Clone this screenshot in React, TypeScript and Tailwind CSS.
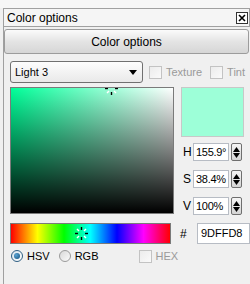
import React from 'react';

const Marker: React.FC<{ className: string }> = ({ className }) => (
  <svg className={className} width="15" height="15" viewBox="0 0 15 15">
    {/* cardinal ticks */}
    <g stroke="#000" strokeWidth="1.4">
      <line x1="7.5" y1="1" x2="7.5" y2="4" />
      <line x1="7.5" y1="11" x2="7.5" y2="14" />
      <line x1="1" y1="7.5" x2="4" y2="7.5" />
      <line x1="11" y1="7.5" x2="14" y2="7.5" />
    </g>
    {/* diagonal ticks */}
    <g stroke="#fff" strokeWidth="1.4">
      <line x1="3" y1="3" x2="5" y2="5" />
      <line x1="12" y1="3" x2="10" y2="5" />
      <line x1="3" y1="12" x2="5" y2="10" />
      <line x1="12" y1="12" x2="10" y2="10" />
    </g>
  </svg>
);

const Spinner: React.FC = () => (
  <div className="flex h-[18px] w-[11px] flex-col items-center justify-center gap-px rounded-[2px] border border-[#6f6f6f] bg-[linear-gradient(to_bottom,#f6f6f6,#d4d4d4)]">
    <svg width="7" height="5" viewBox="0 0 7 5">
      <path d="M3.5 0 L7 5 L0 5 Z" fill="#000" />
    </svg>
    <svg width="7" height="5" viewBox="0 0 7 5">
      <path d="M0 0 L7 0 L3.5 5 Z" fill="#000" />
    </svg>
  </div>
);

const Field: React.FC<{ label: string; value: string }> = ({ label, value }) => (
  <div className="flex h-[18px] items-center">
    <span className="w-[12px] pl-[2px] text-[12px] leading-none">{label}</span>
    <div className="flex h-[18px] w-[36px] items-center border border-[#b7bcc4] bg-white pl-[2px] text-[11px] leading-none tracking-[-0.3px]">
      {value}
    </div>
    <div className="ml-[2px]">
      <Spinner />
    </div>
  </div>
);

const DisabledBox: React.FC = () => (
  <div className="h-[13px] w-[13px] border border-[#c3c3c3] bg-[linear-gradient(to_bottom_right,#ececec,#fafafa)]" />
);

export default function App() {
  return (
    <div className="h-[284px] w-[250px] overflow-hidden bg-[#f0f0f0] font-['Liberation_Sans',sans-serif] text-black">
      <div className="h-2 bg-[#f6f6f6]" />
      <div className="ml-[3px] h-[276px] border-l border-[#a0a0a0]">
        {/* Title bar */}
        <div className="flex h-[19px] items-center justify-between border-y border-r border-[#a0a0a0] bg-[#f5f5f5] pl-[3px] pr-px">
          <span className="text-[12px] leading-none">Color options</span>
          <div className="flex h-[12px] w-[12px] items-center justify-center border border-[#333] bg-white">
            <svg width="8" height="8" viewBox="0 0 8 8">
              <path d="M1 1 L7 7 M7 1 L1 7" stroke="#000" strokeWidth="1.6" />
            </svg>
          </div>
        </div>

        {/* Section header button */}
        <div className="mt-[2px] flex h-[25px] w-[245px] items-center justify-center rounded-[3px] border border-[#9c9c9c] bg-[linear-gradient(to_bottom,#fbfbfb,#e4e4e4_50%,#d6d6d6)] text-[12px]">
          Color options
        </div>

        {/* Preset row */}
        <div className="mt-[7px] flex items-center pl-[6px]">
          <div className="flex h-[22px] w-[133px] items-center justify-between rounded-[3px] border border-[#707070] bg-[linear-gradient(to_bottom,#fdfdfd,#e9e9e9)] pl-[4px] pr-[5px] text-[11px]">
            <span>Light 3</span>
            <svg width="8" height="5" viewBox="0 0 8 5">
              <path d="M0 0 L8 0 L4 5 Z" fill="#000" />
            </svg>
          </div>
          <div className="ml-[6px] flex items-center gap-[4px] text-[11px] text-[#9a9a9a]">
            <DisabledBox />
            <span>Texture</span>
          </div>
          <div className="ml-[8px] flex items-center gap-[4px] text-[11px] text-[#9a9a9a]">
            <DisabledBox />
            <span>Tint</span>
          </div>
        </div>

        {/* Picker */}
        <div className="mt-[4px] flex gap-[7px] pl-[6px]">
          <div className="relative h-[127px] w-[164px] overflow-hidden border border-[#7a7a7a] bg-[linear-gradient(to_right,#00ff99,#ffffff)]">
            <div className="h-full w-full bg-[linear-gradient(to_top,#000000,rgba(0,0,0,0))]" />
            <Marker className="absolute left-[93px] top-[-7px]" />
          </div>
          <div className="flex w-[64px] flex-col">
            <div className="h-[50px] w-[63px] border border-[#c8c8c8] bg-[#9dffd8]" />
            <div className="mt-[6px] flex flex-col gap-[9px]">
              <Field label="H" value="155.9°" />
              <Field label="S" value="38.4%" />
              <Field label="V" value="100%" />
            </div>
          </div>
        </div>

        {/* Hue bar + hex */}
        <div className="mt-[8px] flex items-center gap-[9px] pl-[6px]">
          <div className="relative h-[21px] w-[164px] border border-[#7a7a7a] bg-[linear-gradient(to_right,#ff0000,#ffff00,#00ff00,#00ffff,#0000ff,#ff00ff,#ff0000)]">
            <Marker className="absolute left-[63px] top-[2px]" />
          </div>
          <span className="w-[8px] text-[12px] leading-none">#</span>
          <div className="flex h-[21px] w-[54px] items-center border border-[#b7bcc4] bg-white pl-[3px] text-[11px]">
            9DFFD8
          </div>
        </div>

        {/* Mode row */}
        <div className="mt-[5px] flex h-[14px] items-center pl-[7px] text-[11px]">
          <div className="flex h-[12px] w-[12px] items-center justify-center rounded-full border border-[#2f5f83] bg-[linear-gradient(to_bottom_right,#d7e4ee,#ffffff)]">
            <div className="h-[6px] w-[6px] rounded-full bg-[radial-gradient(circle_at_35%_35%,#5aa4d4,#134f7c)]" />
          </div>
          <span className="ml-[4px]">HSV</span>
          <div className="ml-[9px] h-[12px] w-[12px] rounded-full border border-[#9a9a9a] bg-[linear-gradient(to_bottom_right,#d8d8d8,#fbfbfb)]" />
          <span className="ml-[4px]">RGB</span>
          <div className="ml-[41px] flex items-center gap-[3px] text-[#9a9a9a]">
            <DisabledBox />
            <span>HEX</span>
          </div>
        </div>
      </div>
    </div>
  );
}
